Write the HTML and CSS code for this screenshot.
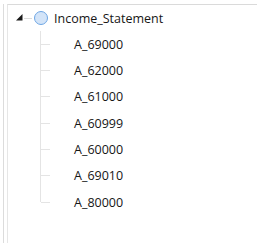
FILE: index.html
```html
<!DOCTYPE html>
<html lang="en">
<head>
  <meta charset="UTF-8" />
  <title>Tree</title>
  <link rel="stylesheet" href="styles.css">
</head>
<body>
  <div class="frame">
    <div class="panel">
      <div class="root-row">
        <svg class="toggle" width="7" height="7" viewBox="0 0 7 7">
          <polygon points="6.5,0 6.5,6.5 0,6.5" fill="#1a1a1a"/>
        </svg>
        <span class="stub"></span>
        <span class="node-icon"></span>
        <span class="label">Income_Statement</span>
      </div>
      <ul class="children">
        <li><span class="label">A_69000</span></li>
        <li><span class="label">A_62000</span></li>
        <li><span class="label">A_61000</span></li>
        <li><span class="label">A_60999</span></li>
        <li><span class="label">A_60000</span></li>
        <li><span class="label">A_69010</span></li>
        <li><span class="label">A_80000</span></li>
      </ul>
    </div>
  </div>
</body>
</html>
```

FILE: styles.css
```css
body {
  margin: 0;
  background: white;
  font-family: "Open Sans", "Noto Sans", sans-serif;
  font-size: 12.5px;
  color: #161616;
}

.frame {
  height: 243px;
  margin-left: 3px;
  padding-left: 3px;
  border-left: 1px solid #dcdcdc;
  box-sizing: border-box;
}

.panel {
  margin-top: 4px;
  height: 239px;
  border-top: 1px solid #dadada;
  border-left: 1px solid #e6e6e6;
  box-sizing: border-box;
}

.root-row {
  display: flex;
  align-items: center;
  height: 26px;
  padding-left: 8px;
}

.toggle {
  margin-bottom: 1px;
}

.stub {
  width: 8px;
  height: 1px;
  margin-left: 1px;
  background: #dcdcdc;
}

.node-icon {
  width: 12px;
  height: 12px;
  margin-left: 2px;
  border: 1px solid #6ea6e4;
  border-radius: 50%;
  background: #d3e4f8;
}

.root-row .label {
  margin-left: 6px;
}

.children {
  list-style: none;
  margin: 0 0 0 32px;
  padding: 0;
}

.children li {
  position: relative;
  display: flex;
  align-items: center;
  height: 26.33px;
  padding-left: 33px;
  border-left: 1px solid #e4e4e4;
}

.children li::before {
  content: "";
  width: 9px;
  height: 1px;
  margin-left: -33px;
  margin-right: 24px;
  background: #e4e4e4;
}

.children li:last-child {
  border-left-color: transparent;
}

.children li:last-child::after {
  content: "";
  position: absolute;
  left: -1px;
  top: 0;
  height: 50%;
  border-left: 1px solid #e4e4e4;
}
```
